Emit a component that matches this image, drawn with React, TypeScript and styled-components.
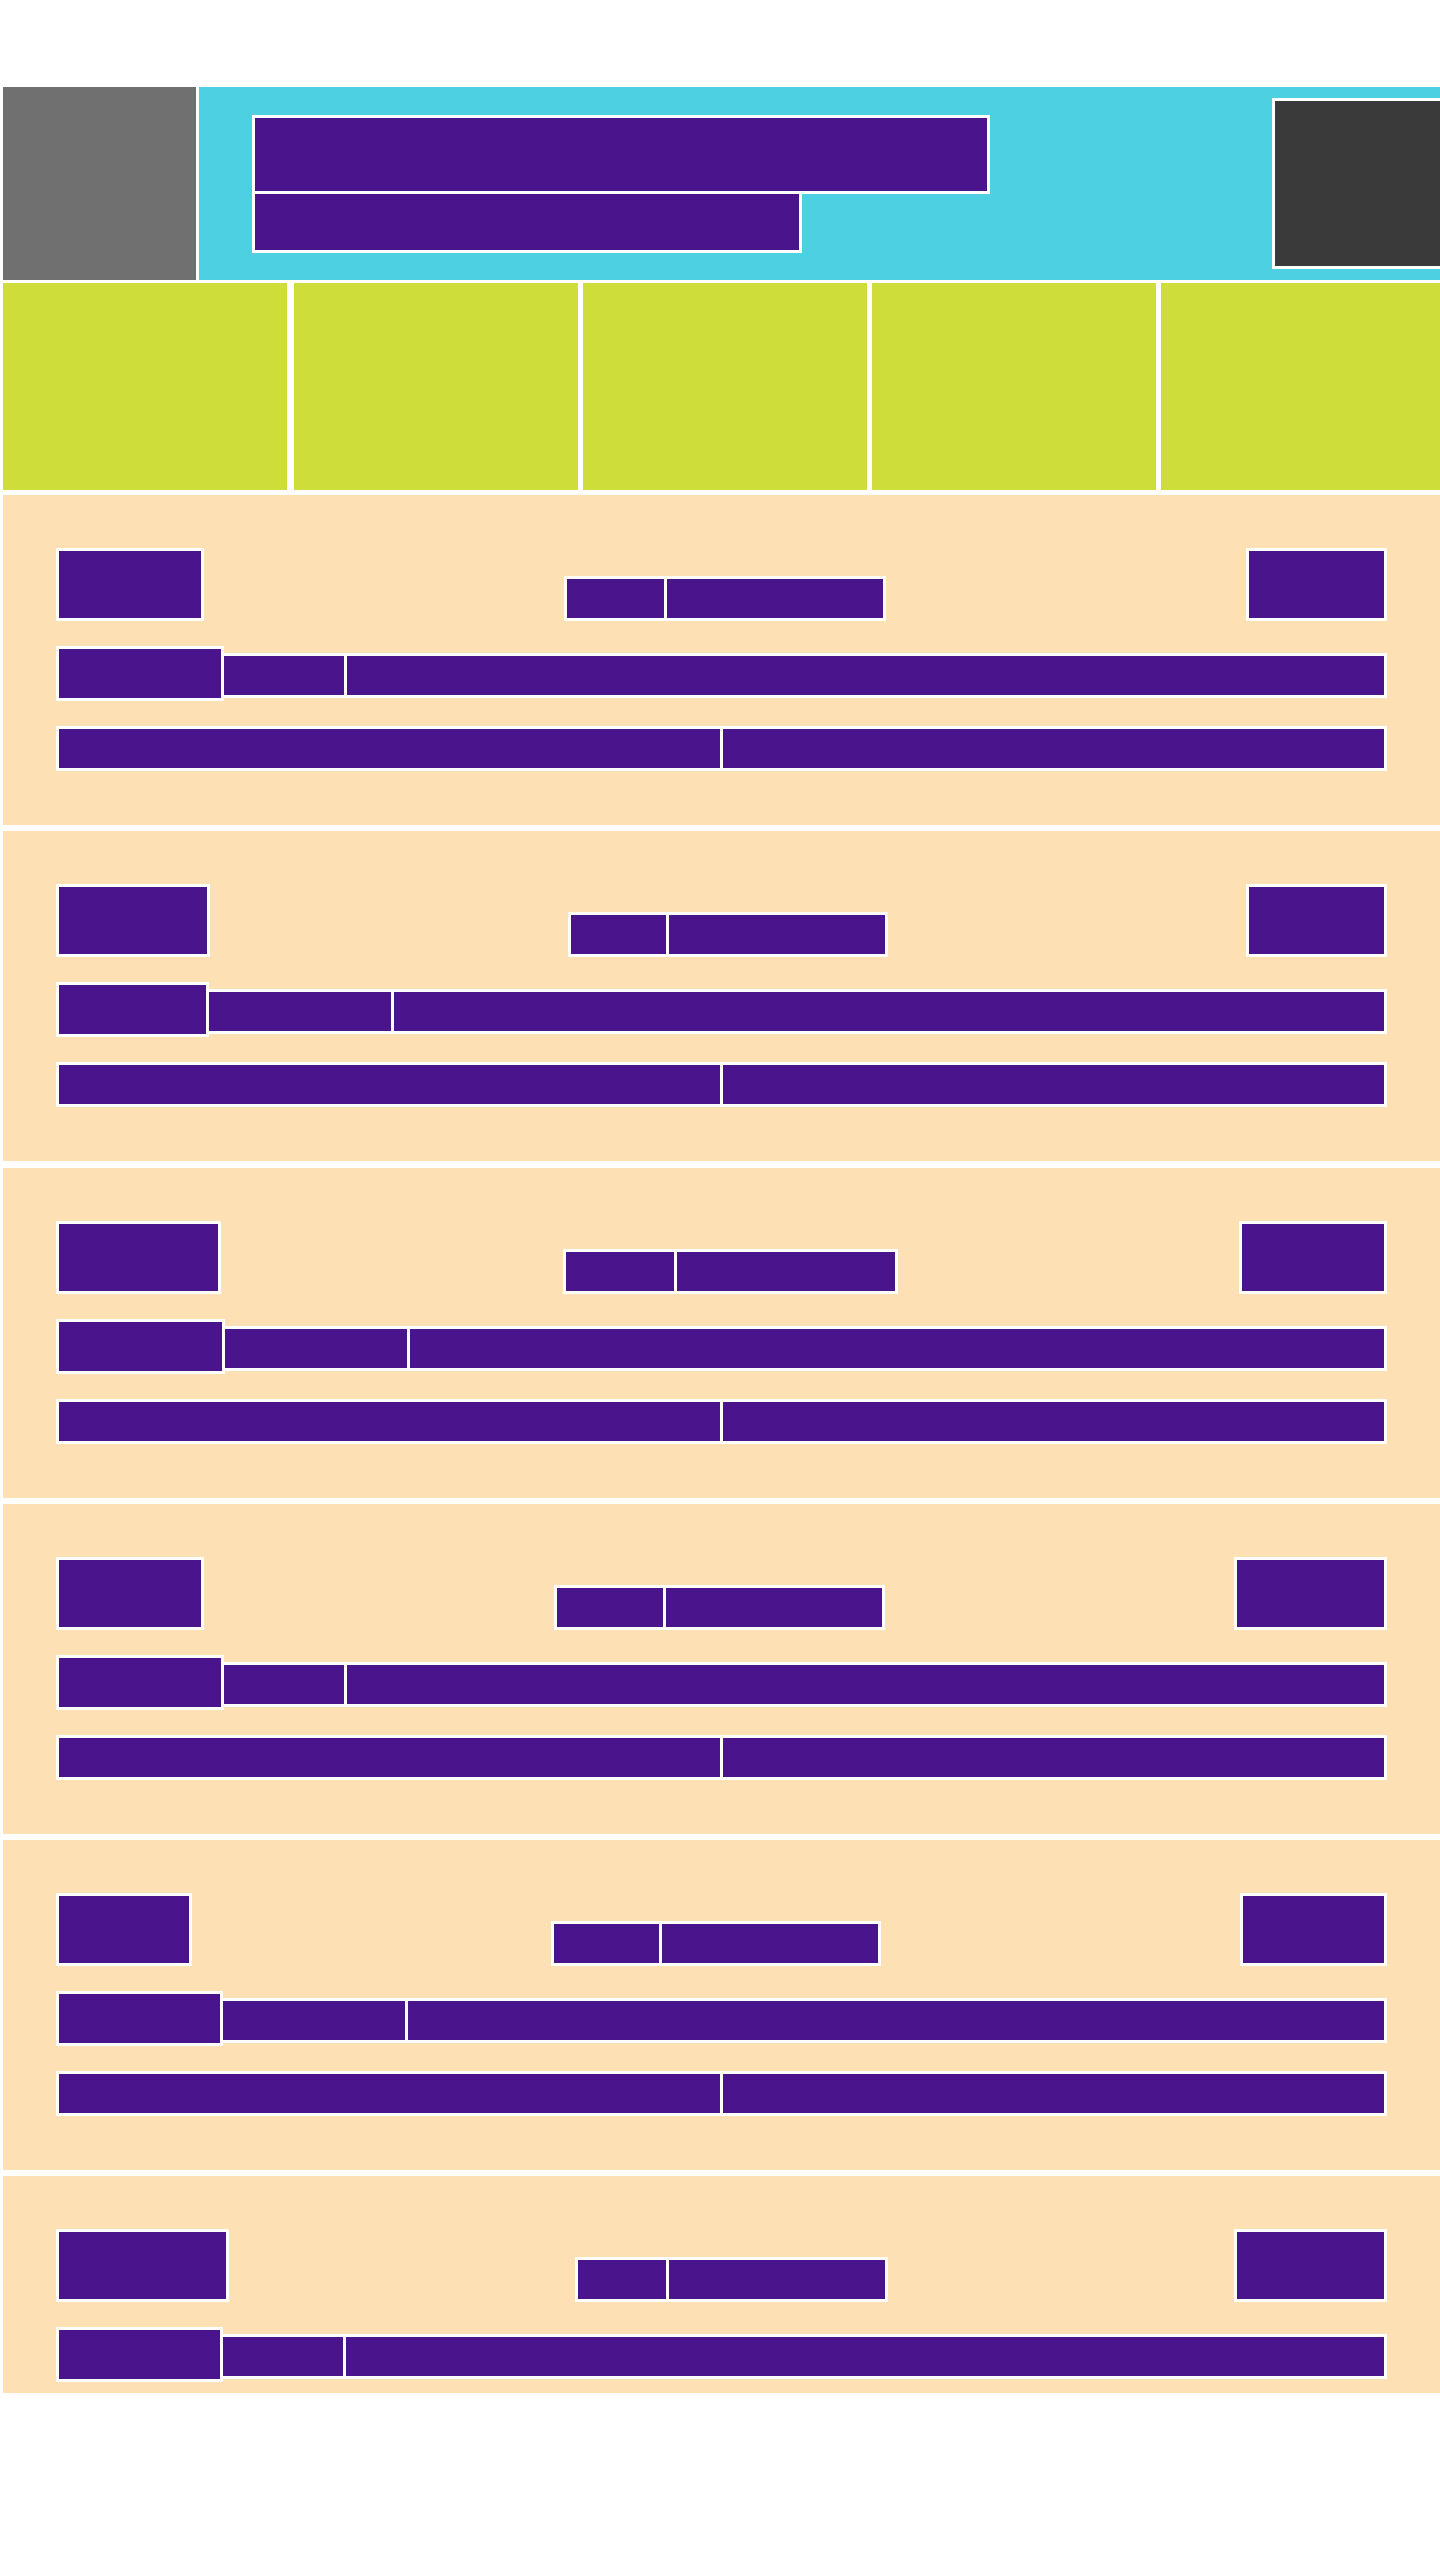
import React from 'react';
import styled, { createGlobalStyle } from 'styled-components';

interface CardData {
  lead: number;
  right: number;
  pair: [number, number];
  meta: [number, number];
}

const cards: CardData[] = [
  { lead: 148, right: 141, pair: [103, 222], meta: [168, 126] },
  { lead: 154, right: 141, pair: [101, 222], meta: [153, 188] },
  { lead: 165, right: 148, pair: [114, 224], meta: [169, 188] },
  { lead: 148, right: 153, pair: [112, 222], meta: [168, 126] },
  { lead: 136, right: 147, pair: [111, 222], meta: [167, 188] },
  { lead: 173, right: 153, pair: [94, 222], meta: [167, 126] },
];

const GlobalStyle = createGlobalStyle`
  html, body {
    margin: 0;
    padding: 0;
    background: #ffffff;
    overflow-x: hidden;
    font-family: 'Liberation Sans', Arial, sans-serif;
  }
  * {
    box-sizing: border-box;
  }
`;

const Page = styled.div`
  width: 1445px;
  padding: 87px 0 0 3px;
`;

const Header = styled.header`
  display: flex;
  gap: 3px;
  height: 193px;
`;

const Logo = styled.div`
  width: 193px;
  flex-shrink: 0;
  background: #707070;
`;

const Banner = styled.div`
  flex: 1;
  display: flex;
  align-items: center;
  padding: 0 2px 0 53px;
  background: #4dd0e1;
`;

const TitleGroup = styled.div`
  display: flex;
  flex-direction: column;
`;

const Block = styled.div<{ $w?: number; $h: number }>`
  width: ${(p) => (p.$w ? `${p.$w}px` : 'auto')};
  height: ${(p) => p.$h}px;
  flex-shrink: 0;
  border: 3px solid #ffffff;
  background: #4a148c;
`;

const SubTitle = styled(Block)`
  margin-top: -3px;
`;

const Avatar = styled.div`
  width: 171px;
  height: 171px;
  margin-left: auto;
  border: 3px solid #ffffff;
  background: #3a3a3a;
`;

const Nav = styled.nav`
  display: flex;
  gap: 5px;
  height: 207px;
  margin-top: 3px;
`;

const NavTile = styled.div`
  width: 284px;
  flex-shrink: 0;
  background: #cfdd3a;

  &:first-child {
    margin-right: 2px;
  }
`;

const List = styled.section`
  display: flex;
  flex-direction: column;
  gap: 6.3px;
  height: 1898px;
  margin-top: 5px;
  overflow: hidden;
`;

const Card = styled.article`
  display: flex;
  flex-direction: column;
  gap: 25px;
  width: 1437px;
  height: 330px;
  flex-shrink: 0;
  padding: 53px 53px 54px;
  background: #fde0b3;
`;

const TopRow = styled.div`
  display: flex;
  justify-content: space-between;
  align-items: flex-end;
`;

const Pair = styled.div`
  display: flex;
`;

const MetaRow = styled.div`
  display: flex;
  align-items: flex-end;
`;

const Chip = styled(Block)`
  margin: 0 0 3px -3px;
`;

const Fill = styled(Block)`
  flex: 1;
  margin-left: -3px;

  &:first-child {
    margin-left: 0;
  }
`;

const FillChip = styled(Fill)`
  margin-bottom: 3px;
`;

const Joined = styled(Block)`
  & + & {
    margin-left: -3px;
  }
`;

export default function App() {
  return (
    <Page>
      <GlobalStyle />
      <Header>
        <Logo />
        <Banner>
          <TitleGroup>
            <Block $w={738} $h={79} />
            <SubTitle $w={550} $h={62} />
          </TitleGroup>
          <Avatar />
        </Banner>
      </Header>
      <Nav>
        {[0, 1, 2, 3, 4].map((i) => (
          <NavTile key={i} />
        ))}
      </Nav>
      <List>
        {cards.map((card, i) => (
          <Card key={i}>
            <TopRow>
              <Block $w={card.lead} $h={73} />
              <Pair>
                <Joined $w={card.pair[0]} $h={45} />
                <Joined $w={card.pair[1]} $h={45} />
              </Pair>
              <Block $w={card.right} $h={73} />
            </TopRow>
            <MetaRow>
              <Block $w={card.meta[0]} $h={55} />
              <Chip $w={card.meta[1]} $h={45} />
              <FillChip $h={45} />
            </MetaRow>
            <MetaRow>
              <Fill $h={45} />
              <Fill $h={45} />
            </MetaRow>
          </Card>
        ))}
      </List>
    </Page>
  );
}
